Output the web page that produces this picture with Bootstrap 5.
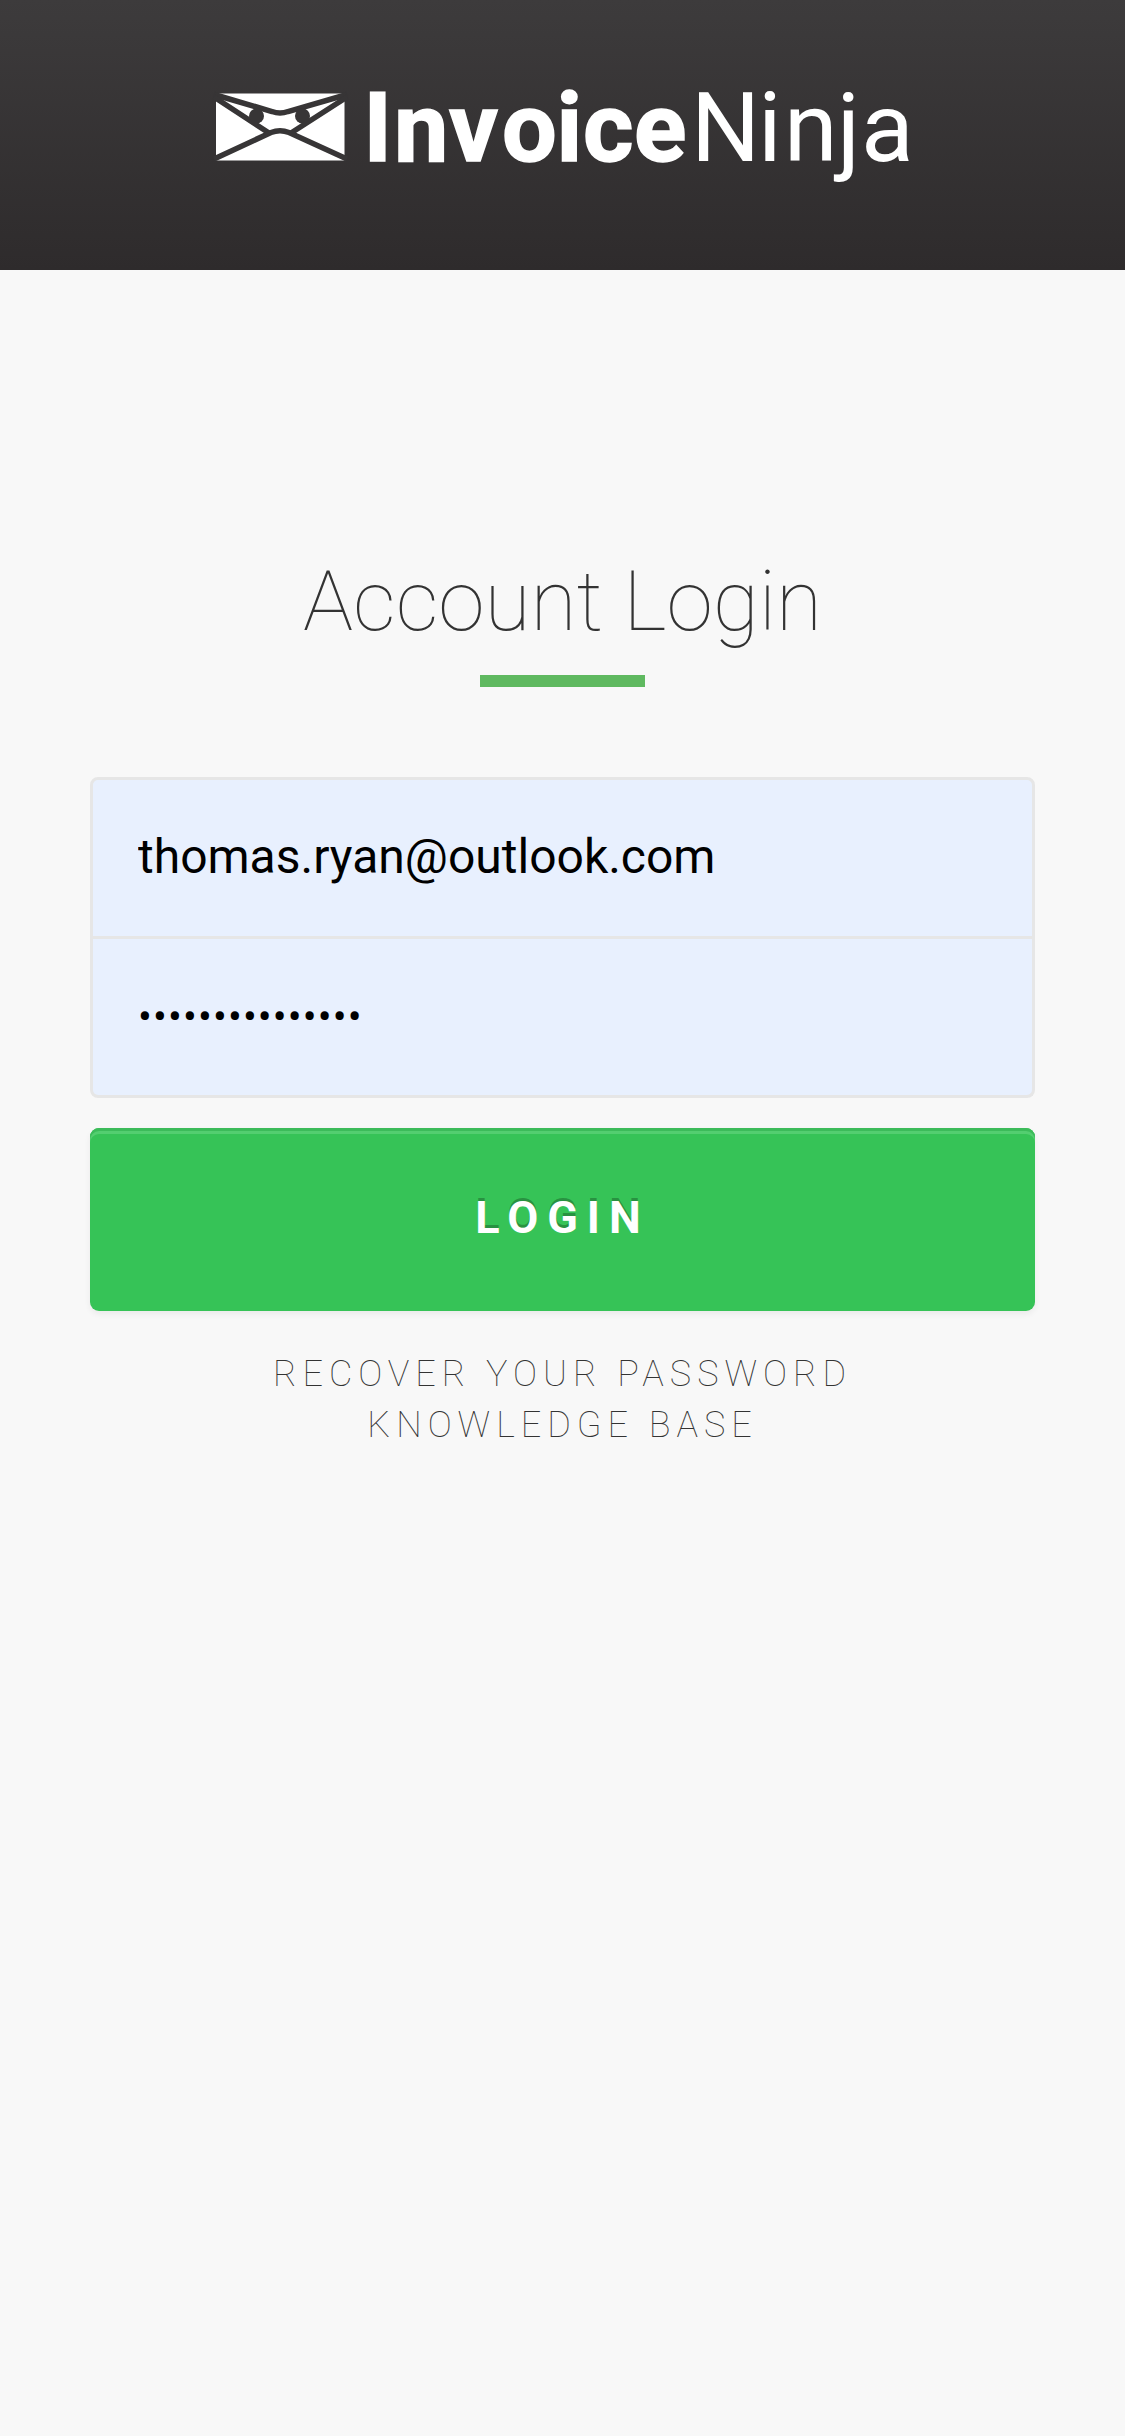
<!DOCTYPE html>
<html lang="en">
<head>
<meta charset="utf-8">
<meta name="viewport" content="width=device-width, initial-scale=1">
<title>Invoice Ninja | Account Login</title>
<link href="https://cdn.jsdelivr.net/npm/bootstrap@5.3.0/dist/css/bootstrap.min.css" rel="stylesheet">
<style>
body { background: #f8f8f8; font-family: Roboto, "Liberation Sans", sans-serif; color: #333; min-height: 2436px; }
.site-header { height: 270px; background: linear-gradient(#3d3b3c, #2e2b2c); padding-top: 60px; }
.brand-logo { width: 750px; height: 150px; }
.login-area { padding: 286px 90px 0; }
.login-title { font-size: 84px; font-weight: 100; line-height: 92px; }
.title-rule { width: 165px; height: 12px; margin: 27px auto 90px; background: #5fb960; }
.login-input { height: 162px; padding: 0 45px 3px; font-size: 48px; line-height: 60px; border: 3px solid #e6e6e6; border-radius: 8px 8px 0 0; }
.login-input, .login-input:focus { background: #e8f0fe; color: #000; }
.login-input.last { height: 159px; padding-bottom: 0; border-top: 0; border-radius: 0 0 8px 8px; font-size: 41px; letter-spacing: 1.15px; }
.btn-login { height: 183px; margin-top: 30px; padding: 0 0 4px; font-size: 45px; font-weight: 700; letter-spacing: 9px; background: #36c357; color: #fff; border: 0; border-radius: 9px; text-shadow: 0 -3px 0 rgba(0,0,0,.25); box-shadow: inset 0 3px 0 #3cbb5a, inset 0 6px 0 #53ce70, 0 3px 6px rgba(0,0,0,.06); }
.help-links { margin-top: 38px; font-size: 36px; font-weight: 100; letter-spacing: 6px; line-height: 51px; }
.help-links a { color: #333; }
</style>
</head>
<body>
<header class="site-header d-flex justify-content-center align-items-start">
  <svg class="brand-logo" viewBox="188 60 750 150" role="img" aria-label="InvoiceNinja">
    <path fill="#fff" d="M216 93.500H344.500V160.500H216Z"/>
    <g fill="none" stroke="#373536" stroke-width="5.500">
      <path d="M214 94.500 272 111.500Q280 114.500 288 111.500L347 94.500"/>
      <path d="M214 97 269 133M347 97 291 133"/>
      <path d="M214 159 271 132.500Q280 129 289 132.500L347 159"/>
    </g>
    <g fill="#373536">
      <circle cx="256.500" cy="116" r="7.500"/>
      <circle cx="302.500" cy="116" r="7.500"/>
    </g>
    <g fill="#fff" font-family="Roboto, sans-serif" font-size="97">
      <text font-weight="700" y="161" x="363.500 394 449 502 556.500 583 634" stroke="#fff" stroke-width="1.500">Invoice</text>
      <text font-weight="400" y="161" x="691 758 784 837 861">Ninja</text>
    </g>
  </svg>
</header>
<main class="login-area">
  <h1 class="login-title text-center m-0">Account Login</h1>
  <div class="title-rule"></div>
  <form>
    <input class="login-input form-control" type="email" value="thomas.ryan@outlook.com" aria-label="Email address">
    <input class="login-input last form-control" type="password" value="abcdefghijklmno" aria-label="Password">
    <button class="btn btn-login w-100 d-block" type="button">LOGIN</button>
  </form>
  <nav class="help-links d-flex flex-column align-items-center">
    <a class="text-decoration-none" href="#">RECOVER YOUR PASSWORD</a>
    <a class="text-decoration-none" href="#">KNOWLEDGE BASE</a>
  </nav>
</main>
<script src="https://cdn.jsdelivr.net/npm/bootstrap@5.3.0/dist/js/bootstrap.bundle.min.js"></script>
</body>
</html>
